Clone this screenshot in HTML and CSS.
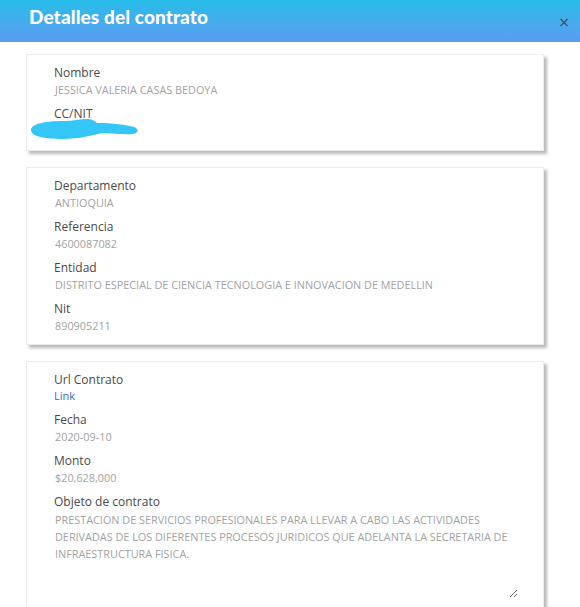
FILE: index.html
```html
<!DOCTYPE html>
<html lang="es">
<head>
<meta charset="utf-8">
<title>Detalles del contrato</title>
<link rel="stylesheet" href="styles.css">
</head>
<body>
<header class="modal-header">
  <h1 class="modal-title">Detalles del contrato</h1>
  <span class="close">×</span>
</header>
<main class="modal-body">
  <section class="card">
    <div class="field">
      <div class="label">Nombre</div>
      <div class="value">JESSICA VALERIA CASAS BEDOYA</div>
    </div>
    <div class="field">
      <div class="label">CC/NIT</div>
      <div class="value blob-row">
        <svg class="blob" width="112" height="22" viewBox="0 0 112 22"><path d="M2,12 C2,6 16,3 34,3 C44,3 52,1 58,1 C63,1 66,3 68,5 C82,5 98,7 105,9 C110,11 110,15 104,16 C94,17 84,15 74,15 C64,17 50,21 34,21 C14,21 2,18 2,12 Z" fill="#33c6f7"/></svg>
      </div>
    </div>
  </section>

  <section class="card">
    <div class="field">
      <div class="label">Departamento</div>
      <div class="value">ANTIOQUIA</div>
    </div>
    <div class="field">
      <div class="label">Referencia</div>
      <div class="value">4600087082</div>
    </div>
    <div class="field">
      <div class="label">Entidad</div>
      <div class="value">DISTRITO ESPECIAL DE CIENCIA TECNOLOGIA E INNOVACION DE MEDELLIN</div>
    </div>
    <div class="field">
      <div class="label">Nit</div>
      <div class="value">890905211</div>
    </div>
  </section>

  <section class="card card-last">
    <div class="field">
      <div class="label">Url Contrato</div>
      <a class="link" href="#">Link</a>
    </div>
    <div class="field">
      <div class="label">Fecha</div>
      <div class="value">2020-09-10</div>
    </div>
    <div class="field">
      <div class="label">Monto</div>
      <div class="value">$20,628,000</div>
    </div>
    <div class="field">
      <div class="label">Objeto de contrato</div>
      <textarea class="text" rows="5" readonly>PRESTACION DE SERVICIOS PROFESIONALES PARA LLEVAR A CABO LAS ACTIVIDADES
DERIVADAS DE LOS DIFERENTES PROCESOS JURIDICOS QUE ADELANTA LA SECRETARIA DE
INFRAESTRUCTURA FISICA.</textarea>
    </div>
  </section>
</main>
</body>
</html>
```

FILE: styles.css
```css
html, body {
  margin: 0;
  padding: 0;
  background: #ffffff;
  overflow: hidden;
}
body {
  font-family: "Open Sans", "Noto Sans", sans-serif;
  width: 580px;
  height: 607px;
}
.modal-header {
  height: 42px;
  background: linear-gradient(180deg, #27bde8 0%, #4aa9ee 60%, #5a9bf1 100%);
  display: flex;
  align-items: center;
  justify-content: space-between;
  padding: 0 10px 0 29px;
  box-sizing: border-box;
}
.modal-title {
  margin: 0;
  margin-top: -10px;
  font-family: "Lato", sans-serif;
  font-weight: 900;
  font-size: 19px;
  color: #ffffff;
  letter-spacing: 0.1px;
}
.close {
  font-family: "DejaVu Sans", sans-serif;
  font-size: 14px;
  color: #3a4a5a;
  margin-top: 2px;
}
.modal-body {
  height: 565px;
  overflow: hidden;
  box-sizing: border-box;
  padding: 12px 36px 0 26px;
  display: flex;
  flex-direction: column;
  gap: 16px;
}
.card {
  flex: none;
  background: #fff;
  border: 1px solid #ececec;
  box-shadow: 3px 3px 3px rgba(0, 0, 0, 0.28);
  padding: 9px 20px 10px 27px;
}
.card-last {
  height: 300px;
}
.field + .field {
  margin-top: 7px;
}
.label {
  font-size: 12px;
  line-height: 17px;
  color: #4a4a4a;
}
.value {
  font-size: 10.85px;
  line-height: 17px;
  color: #a3a3a3;
  padding-left: 1px;
}
.blob-row {
  height: 22px;
  margin-top: 0;
}
.blob {
  display: block;
  margin-left: -26px;
  margin-top: -4px;
}
.link {
  display: block;
  font-size: 11px;
  line-height: 16px;
  color: #2f6fc0;
  text-decoration: none;
}
.text {
  display: block;
  width: 464px;
  box-sizing: border-box;
  margin-top: 0;
  border: none;
  outline: none;
  padding: 1px 1px;
  font-family: "Open Sans", "Noto Sans", sans-serif;
  font-size: 10.85px;
  line-height: 17px;
  color: #a3a3a3;
  background: #fff;
  height: 88px;
  overflow: hidden;
}
```
